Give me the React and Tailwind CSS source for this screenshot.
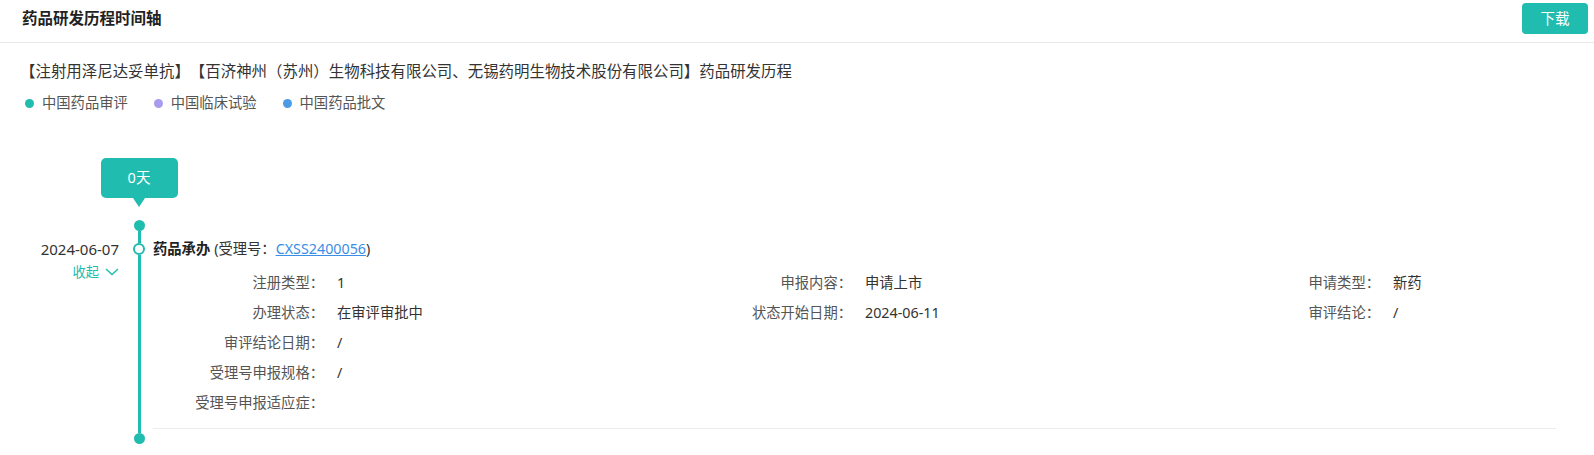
const details = [
  [['注册类型', '1'], ['申报内容', '申请上市'], ['申请类型', '新药']],
  [['办理状态', '在审评审批中'], ['状态开始日期', '2024-06-11'], ['审评结论', '/']],
  [['审评结论日期', '/']],
  [['受理号申报规格', '/']],
  [['受理号申报适应症', '']],
]

const legend = [
  { label: '中国药品审评', dot: 'bg-[#20bcaf]' },
  { label: '中国临床试验', dot: 'bg-[#a99cee]' },
  { label: '中国药品批文', dot: 'bg-[#4b9be6]' },
]

function Field({ label, value }) {
  return (
    <div className="flex items-center h-[30px]">
      <span className="w-[171px] shrink-0 text-right text-[#555]">{label}：</span>
      <span className="pl-[13px] text-[#333]">{value}</span>
    </div>
  )
}

export default function App() {
  return (
    <div className="w-[1594px] h-[455px] overflow-hidden bg-white font-['Noto_Sans','Noto_Sans_CJK_SC',sans-serif] text-[#333] [text-spacing-trim:space-all]">
      {/* header */}
      <div className="h-[43px] pb-[6px] border-b border-[#e8e8e8] flex items-center justify-between pl-[22px] pr-[6px]">
        <h1 className="text-[15.5px] font-bold text-[#222] leading-[22px]">药品研发历程时间轴</h1>
        <button className="w-[66px] h-[31px] rounded-[4px] bg-[#20bcaf] text-white text-[14.5px] leading-none">下载</button>
      </div>

      <p className="mt-[17px] pl-[20px] text-[15.45px] leading-[22px] text-[#333]">
        【注射用泽尼达妥单抗】【百济神州（苏州）生物科技有限公司、无锡药明生物技术股份有限公司】药品研发历程
      </p>
      <div className="mt-[11px] flex items-center gap-[26px] pl-[25px] h-[20px]">
        {legend.map(l => (
          <div key={l.label} className="flex items-center gap-[8px]">
            <span className={`w-[9px] h-[9px] rounded-full ${l.dot}`} />
            <span className="text-[14.3px] leading-[20px] text-[#555]">{l.label}</span>
          </div>
        ))}
      </div>

      {/* timeline */}
      <div className="mt-[45px] flex">
        <div className="w-[125px] shrink-0 pt-[80px] pr-[6px] flex flex-col items-end">
          <span className="text-[15px] leading-[22px] text-[#333]">2024-06-07</span>
          <button className="mt-[2px] flex items-center gap-[6px] text-[13.3px] leading-[20px] text-[#20bcaf]">
            收起
            <svg width="14" height="8" viewBox="0 0 14 8" fill="none">
              <polyline points="1,1 7,6.5 13,1" stroke="#20bcaf" strokeWidth="1.4" />
            </svg>
          </button>
        </div>

        <div className="w-[28px] shrink-0 flex flex-col items-center">
          <div className="w-[77px] h-[40px] shrink-0 rounded-[5px] bg-[#20bcaf] text-white text-[14.5px] flex items-center justify-center">
            0天
          </div>
          <div className="w-0 h-0 border-x-[6px] border-x-transparent border-t-[9px] border-t-[#20bcaf]" />
          <div className="mt-[13px] w-[11px] h-[11px] rounded-full bg-[#20bcaf]" />
          <div className="w-[3px] h-[12px] bg-[#20bcaf]" />
          <div className="w-[12px] h-[12px] rounded-full border-2 border-[#20bcaf] bg-white" />
          <div className="w-[3px] flex-1 bg-[#20bcaf]" />
          <div className="w-[11px] h-[11px] rounded-full bg-[#20bcaf]" />
        </div>

        <div className="flex-1 mr-[38px] pt-[80px] pb-[15px]">
          <div className="pb-[10px] border-b border-[#ececec]">
            <div className="text-[14.3px] leading-[22px]">
              <span className="font-bold text-[#222]">药品承办</span>
              <span className="ml-[4px]">(受理号：</span>
              <a href="#" className="text-[#3a8ee6] underline">CXSS2400056</a>
              <span>)</span>
            </div>
            <div className="mt-[8px] text-[14.3px]">
              {details.map((row, i) => (
                <div key={i} className="grid grid-cols-[528px_528px_1fr]">
                  {row.map(([label, value]) => (
                    <Field key={label} label={label} value={value} />
                  ))}
                </div>
              ))}
            </div>
          </div>
        </div>
      </div>
    </div>
  )
}
